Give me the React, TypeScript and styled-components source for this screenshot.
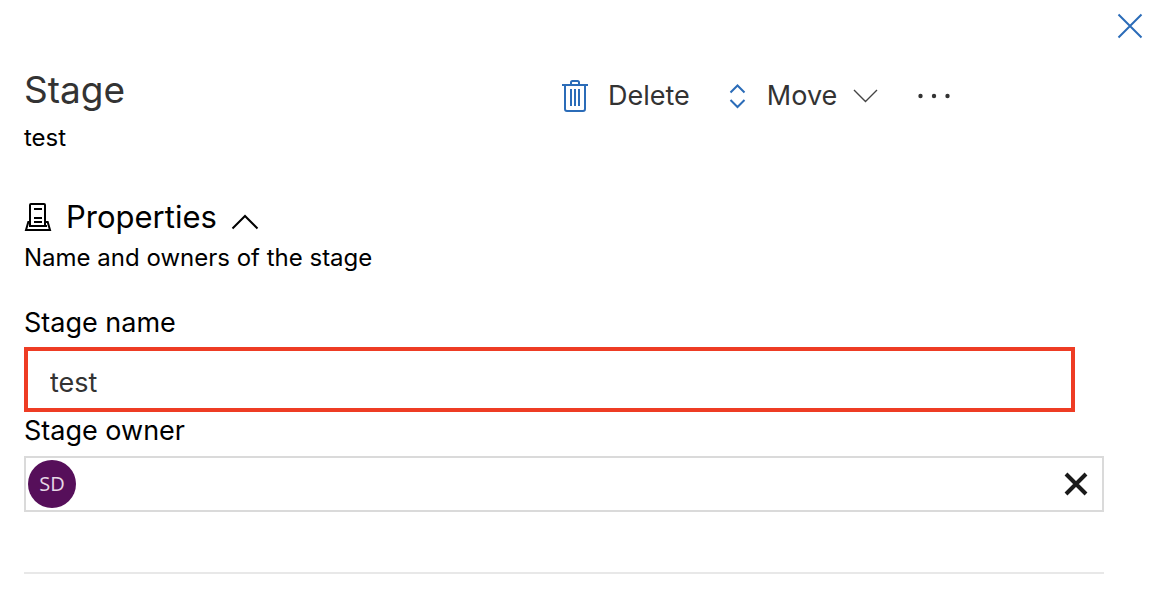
import React, { useState } from "react";
import styled, { createGlobalStyle } from "styled-components";

const GlobalStyle = createGlobalStyle`
  *, *::before, *::after { box-sizing: border-box; }
  body {
    margin: 0;
    background: #fff;
    color: #000;
    font-family: Inter, "Liberation Sans", sans-serif;
  }
  h1, h2, p { margin: 0; font-weight: 400; }
  button, input { font: inherit; color: inherit; }
  svg { display: block; flex: none; }
`;

const Panel = styled.main`
  display: flex;
  flex-direction: column;
  padding-bottom: 20px;
`;

const IconButton = styled.button`
  display: flex;
  padding: 0;
  border: 0;
  background: none;
  cursor: pointer;
`;

const CloseRow = styled.div`
  display: flex;
  justify-content: flex-end;
  padding: 12px 8px 0 0;
`;

const Content = styled.div`
  display: flex;
  flex-direction: column;
  padding: 26px 48px 0 24px;
`;

const Header = styled.header`
  display: grid;
  grid-template-columns: 538fr 542fr;
  align-items: start;
`;

const Title = styled.h1`
  font-size: 37px;
  line-height: 48px;
  color: #333;
`;

const Text = styled.p`
  font-size: 24px;
  line-height: 32px;
`;

const Subtitle = styled(Text)`
  margin-top: 8px;
`;

const Description = styled(Text)`
  margin-top: 5px;
`;

const Toolbar = styled.div`
  display: flex;
  align-items: center;
  gap: 39px;
  height: 60px;
`;

const Command = styled(IconButton)`
  align-items: center;
  gap: 16px;
  font-size: 27px;
  line-height: 36px;
  color: #333;
`;

const SectionHeader = styled.div`
  display: flex;
  align-items: center;
  gap: 14px;
  margin-top: 43px;
`;

const SectionTitle = styled.h2`
  font-size: 31px;
  line-height: 40px;
`;

const Toggle = styled(IconButton)`
  padding-top: 10px;
`;

const Label = styled.label`
  font-size: 27px;
  line-height: 36px;
`;

const Form = styled.form`
  display: flex;
  flex-direction: column;
  margin-top: 31px;
`;

const NameInput = styled.input`
  height: 65px;
  margin: 6px 29px 1px 0;
  padding: 6px 22px 0;
  border: 4px solid #ee3c24;
  border-radius: 0;
  background: #fff;
  font-size: 27px;
  color: #333;
  outline: none;
`;

const OwnerBox = styled.div`
  display: flex;
  align-items: center;
  height: 56px;
  margin-top: 7px;
  padding: 0 14px 0 2px;
  border: 2px solid #dadada;
`;

const Avatar = styled.span`
  display: flex;
  align-items: center;
  justify-content: center;
  flex: none;
  width: 48px;
  height: 48px;
  border-radius: 50%;
  background: #560f5a;
  color: #e6d8e6;
  font: 20px/24px "Open Sans", "Noto Sans", sans-serif;
`;

const OwnerInput = styled.input`
  flex: 1;
  min-width: 0;
  height: 48px;
  padding: 0 12px;
  border: 0;
  background: none;
  font-size: 27px;
  outline: none;
`;

const Divider = styled.hr`
  width: 100%;
  height: 2px;
  margin: 60px 0 0;
  border: 0;
  background: #e8e8e8;
`;

const TrashIcon = () => (
  <svg width="30" height="34" viewBox="0 0 30 34" fill="none" stroke="#2b6cb8" strokeWidth="2">
    <path d="M0 6h26M3 6v24q0 2 2 2h16q2 0 2-2V6M9 6V3.500q0-1.500 1.500-1.500h5q1.500 0 1.500 1.500V6" />
    <path d="M9 10v17M13 10v17M17 10v17" />
  </svg>
);

const MoveIcon = () => (
  <svg width="22" height="28" viewBox="0 0 22 28" fill="none" stroke="#2b6cb8" strokeWidth="2">
    <path d="M1.500 10.500 8.500 3.500l7 7M1.500 18l7 7 7-7" />
  </svg>
);

const MoreIcon = () => (
  <svg width="34" height="8" viewBox="0 0 34 8" fill="#333">
    <circle cx="3.500" cy="4" r="2.200" />
    <circle cx="17" cy="4" r="2.200" />
    <circle cx="30.500" cy="4" r="2.200" />
  </svg>
);

const StageIcon = () => (
  <svg width="28" height="30" viewBox="0 0 28 30" fill="none" stroke="#000" strokeWidth="2">
    <path d="M6 24V3q0-1 1-1h13q1 0 1 1v21" />
    <path d="M10 7h8M10 16h8M10 20h8M5 24h18" />
    <path d="M6 20H4.300L2 28h24l-2.300-8H21" />
  </svg>
);

export default function App() {
  const [name, setName] = useState("test");
  const [owner, setOwner] = useState("");
  return (
    <>
      <GlobalStyle />
      <Panel>
        <CloseRow>
          <IconButton type="button" aria-label="Close">
            <svg width="28" height="28" viewBox="0 0 28 28" stroke="#2b6cb8" strokeWidth="2">
              <path d="m2.500 2.500 23 23m0-23-23 23" />
            </svg>
          </IconButton>
        </CloseRow>
        <Content>
          <Header>
            <div>
              <Title>Stage</Title>
              <Subtitle>test</Subtitle>
            </div>
            <Toolbar>
              <Command type="button">
                <TrashIcon />
                Delete
              </Command>
              <Command type="button">
                <MoveIcon />
                Move
                <svg width="25" height="16" viewBox="0 0 25 16" fill="none" stroke="#444" strokeWidth="1.400">
                  <path d="m1 2 11.500 11.500L24 2" />
                </svg>
              </Command>
              <IconButton type="button" aria-label="More commands">
                <MoreIcon />
              </IconButton>
            </Toolbar>
          </Header>
          <SectionHeader>
            <StageIcon />
            <SectionTitle>Properties</SectionTitle>
            <Toggle type="button" aria-label="Collapse properties">
              <svg width="28" height="18" viewBox="0 0 28 18" fill="none" stroke="#000" strokeWidth="2">
                <path d="m1.500 15.500 12.500-12.500 12.500 12.500" />
              </svg>
            </Toggle>
          </SectionHeader>
          <Description>Name and owners of the stage</Description>
          <Form>
            <Label htmlFor="stage-name">Stage name</Label>
            <NameInput id="stage-name" value={name} onChange={(e) => setName(e.target.value)} />
            <Label htmlFor="stage-owner">Stage owner</Label>
            <OwnerBox>
              <Avatar>SD</Avatar>
              <OwnerInput id="stage-owner" value={owner} onChange={(e) => setOwner(e.target.value)} />
              <IconButton type="button" aria-label="Remove owner">
                <svg width="24" height="24" viewBox="0 0 24 24" stroke="#1a1a1a" strokeWidth="4">
                  <path d="m2 2 20 20m0-20L2 22" />
                </svg>
              </IconButton>
            </OwnerBox>
          </Form>
          <Divider />
        </Content>
      </Panel>
    </>
  );
}
